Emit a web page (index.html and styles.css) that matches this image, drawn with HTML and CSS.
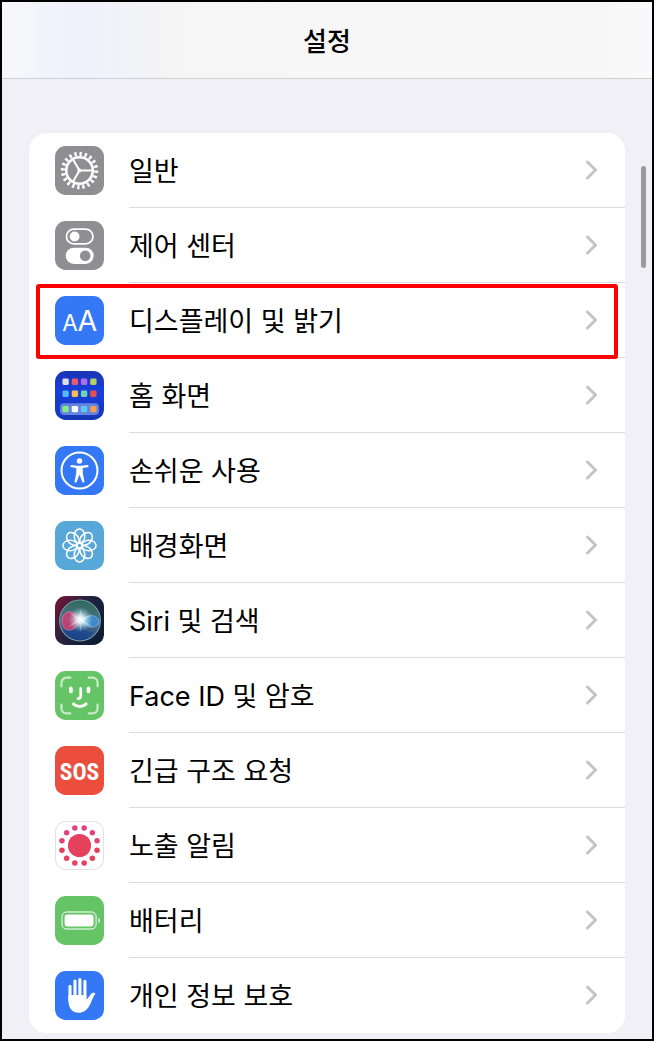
FILE: index.html
```
<!DOCTYPE html>
<html lang="ko">
<head>
    <meta charset="UTF-8">
    <meta name="viewport" content="width=device-width, initial-scale=1.0">
    <title>설정</title>
    <link rel="stylesheet" href="styles.css">
</head>
<body>
    <div class="screen">
        <header class="nav-bar">
            <h1 class="title">설정</h1>
        </header>
        <main class="content">
            <nav class="list">
                <a class="row" href="#general">
                    <svg class="icon" viewBox="0 0 48 48">
                        <rect width="48" height="48" rx="10.5" fill="#8e8e93"/>
                        <g fill="none" stroke="#fff">
                            <circle cx="24" cy="24" r="16.3" stroke-width="4" pathLength="40" stroke-dasharray="0.9 1.1"/>
                            <circle cx="24" cy="24" r="13" stroke-width="2.6"/>
                            <path d="M24 24h12.5M24 24l-6.3-10.8M24 24l-6.3 10.8" stroke-width="2"/>
                        </g>
                        <circle cx="24" cy="24" r="2" fill="#fff"/>
                    </svg>
                    <span class="label">일반</span>
                    <svg class="chevron" viewBox="0 0 12 20"><path d="M2 2l8 8-8 8"/></svg>
                </a>
                <a class="row" href="#control-center">
                    <svg class="icon" viewBox="0 0 48 48">
                        <rect width="48" height="48" rx="10.5" fill="#8e8e93"/>
                        <rect x="11.2" y="8" width="26" height="14.4" rx="7.2" fill="none" stroke="#fff" stroke-width="1.7"/>
                        <circle cx="19.2" cy="15.2" r="4.8" fill="#fff"/>
                        <rect x="10.5" y="26.2" width="27.4" height="15.8" rx="7.9" fill="#fff"/>
                        <circle cx="29.6" cy="34.1" r="5.2" fill="#8e8e93"/>
                    </svg>
                    <span class="label">제어 센터</span>
                    <svg class="chevron" viewBox="0 0 12 20"><path d="M2 2l8 8-8 8"/></svg>
                </a>
                <a class="row highlight" href="#display">
                    <svg class="icon" viewBox="0 0 48 48">
                        <rect width="48" height="48" rx="10.5" fill="#3478f6"/>
                        <text class="aa-small" x="7" y="34">A</text>
                        <text class="aa-large" x="22" y="34">A</text>
                    </svg>
                    <span class="label">디스플레이 및 밝기</span>
                    <svg class="chevron" viewBox="0 0 12 20"><path d="M2 2l8 8-8 8"/></svg>
                </a>
                <a class="row" href="#home-screen">
                    <svg class="icon" viewBox="0 0 48 48">
                        <defs>
                            <linearGradient id="home-bg" x1="0" y1="0" x2="0" y2="1">
                                <stop offset="0" stop-color="#1a35b4"/>
                                <stop offset="0.4" stop-color="#173fdc"/>
                                <stop offset="1" stop-color="#1735b8"/>
                            </linearGradient>
                        </defs>
                        <rect width="48" height="48" rx="10.5" fill="url(#home-bg)"/>
                        <rect x="5" y="31.6" width="38" height="11.4" rx="3.5" fill="#6683df"/>
                        <rect x="7.3" y="7.4" width="6.2" height="6.2" rx="1.4" fill="#dcdce4"/>
                        <rect x="16.4" y="7.4" width="6.2" height="6.2" rx="1.4" fill="#ee5a68"/>
                        <rect x="25.4" y="7.4" width="6.2" height="6.2" rx="1.4" fill="#b06cf4"/>
                        <rect x="34.5" y="7.4" width="6.2" height="6.2" rx="1.4" fill="#b5d260"/>
                        <rect x="7.3" y="19.2" width="6.2" height="6.2" rx="1.4" fill="#58b5f6"/>
                        <rect x="16.4" y="19.2" width="6.2" height="6.2" rx="1.4" fill="#f4bd4c"/>
                        <rect x="25.4" y="19.2" width="6.2" height="6.2" rx="1.4" fill="#70d4b0"/>
                        <rect x="34.5" y="19.2" width="6.2" height="6.2" rx="1.4" fill="#e84e48"/>
                        <rect x="7.3" y="34.2" width="6.2" height="6.2" rx="1.4" fill="#84ec84"/>
                        <rect x="16.4" y="34.2" width="6.2" height="6.2" rx="1.4" fill="#fff"/>
                        <rect x="25.4" y="34.2" width="6.2" height="6.2" rx="1.4" fill="#5cc8f8"/>
                        <rect x="34.5" y="34.2" width="6.2" height="6.2" rx="1.4" fill="#f4a050"/>
                    </svg>
                    <span class="label">홈 화면</span>
                    <svg class="chevron" viewBox="0 0 12 20"><path d="M2 2l8 8-8 8"/></svg>
                </a>
                <a class="row" href="#accessibility">
                    <svg class="icon" viewBox="0 0 48 48">
                        <rect width="48" height="48" rx="10.5" fill="#3478f6"/>
                        <circle cx="24" cy="24" r="17.6" fill="none" stroke="#fff" stroke-width="2"/>
                        <circle cx="24" cy="14.6" r="2.7" fill="#fff"/>
                        <path d="M16.4 18.6L22 19.4h4l5.6-.8c1.6-.1 1.8 1.8.3 2.1L27.2 21.6v4.8l1.6 8.2c.2 1.5-1.5 1.9-2 .6L24 28.2l-2.8 7c-.6 1.3-2.3.8-2-.6l1.6-8.2v-4.8l-4.7-.9c-1.5-.4-1.2-2.2.3-2.100z" fill="#fff"/>
                    </svg>
                    <span class="label">손쉬운 사용</span>
                    <svg class="chevron" viewBox="0 0 12 20"><path d="M2 2l8 8-8 8"/></svg>
                </a>
                <a class="row" href="#wallpaper">
                    <svg class="icon" viewBox="0 0 48 48">
                        <defs>
                            <ellipse id="petal" cx="24" cy="14.8" rx="5.2" ry="7"/>
                        </defs>
                        <rect width="48" height="48" rx="10.5" fill="#57a7d9"/>
                        <g fill="none" stroke="#fff" stroke-width="1.5">
                            <use href="#petal"/>
                            <use href="#petal" transform="rotate(45 24 24)"/>
                            <use href="#petal" transform="rotate(90 24 24)"/>
                            <use href="#petal" transform="rotate(135 24 24)"/>
                            <use href="#petal" transform="rotate(180 24 24)"/>
                            <use href="#petal" transform="rotate(225 24 24)"/>
                            <use href="#petal" transform="rotate(270 24 24)"/>
                            <use href="#petal" transform="rotate(315 24 24)"/>
                            <circle cx="24" cy="24" r="2.6"/>
                        </g>
                    </svg>
                    <span class="label">배경화면</span>
                    <svg class="chevron" viewBox="0 0 12 20"><path d="M2 2l8 8-8 8"/></svg>
                </a>
                <a class="row" href="#siri">
                    <svg class="icon" viewBox="0 0 48 48">
                        <defs>
                            <linearGradient id="siri-bg" x1="0" y1="0.2" x2="1" y2="0.8">
                                <stop offset="0" stop-color="#6c1534"/>
                                <stop offset="0.45" stop-color="#202440"/>
                                <stop offset="1" stop-color="#0c1c34"/>
                            </linearGradient>
                            <linearGradient id="siri-orb" x1="0.6" y1="0" x2="0.4" y2="1">
                                <stop offset="0" stop-color="#2c6a5c"/>
                                <stop offset="0.5" stop-color="#4f7088"/>
                                <stop offset="1" stop-color="#143a80"/>
                            </linearGradient>
                            <radialGradient id="siri-glow">
                                <stop offset="0" stop-color="#fff"/>
                                <stop offset="0.3" stop-color="#e8fcff" stop-opacity="0.85"/>
                                <stop offset="1" stop-color="#8cd8e0" stop-opacity="0"/>
                            </radialGradient>
                        </defs>
                        <rect width="48" height="48" rx="10.5" fill="url(#siri-bg)"/>
                        <circle cx="24.5" cy="24" r="20" fill="url(#siri-orb)" stroke="#79a0a8" stroke-width="1"/>
                        <path d="M10 34c7-1 12-5 15-10 2 8 7 13 13 11-7 10-21 10-28-1z" fill="#1c4690" opacity="0.7"/>
                        <path d="M25 24C21 13 8 12 7 24s13 13 18 0z" fill="#d83c70" stroke="#f090a8" stroke-width="0.7" opacity="0.8"/>
                        <path d="M25 24c6-7 18-6 18 1s-12 8-18-1z" fill="#3c90e0" stroke="#8cc8f0" stroke-width="0.7" opacity="0.8"/>
                        <circle cx="25" cy="23" r="12" fill="url(#siri-glow)"/>
                        <path d="M25 13l1.5 8.5L37 18l-9 6 10 7-12-5-1 9-1.5-9.5L13 30l9-6.5L14 16l9.5 5z" fill="#fff" opacity="0.35"/>
                    </svg>
                    <span class="label"><span class="latin">Siri</span> 및 검색</span>
                    <svg class="chevron" viewBox="0 0 12 20"><path d="M2 2l8 8-8 8"/></svg>
                </a>
                <a class="row" href="#face-id">
                    <svg class="icon" viewBox="0 0 48 48">
                        <rect width="48" height="48" rx="10.5" fill="#65c466"/>
                        <g fill="none" stroke="#fff" stroke-linecap="round">
                            <path d="M6.3 15v-3.5a5 5 0 0 1 5-5H15M33 6.5h3.7a5 5 0 0 1 5 5V15M41.7 33v3.5a5 5 0 0 1-5 5H33M15 41.5h-3.7a5 5 0 0 1-5-5V33" stroke-width="2.2" opacity="0.65"/>
                            <path d="M15.6 17v3M32.8 17v3" stroke-width="3.6"/>
                            <path d="M25.2 17v7.5c0 1.8-.8 2.5-2.7 2.5" stroke-width="2.6"/>
                            <path d="M18 32.2c3.5 3.4 9 3.4 12.5 0" stroke-width="2.8"/>
                        </g>
                    </svg>
                    <span class="label"><span class="latin">Face ID</span> 및 암호</span>
                    <svg class="chevron" viewBox="0 0 12 20"><path d="M2 2l8 8-8 8"/></svg>
                </a>
                <a class="row" href="#sos">
                    <svg class="icon" viewBox="0 0 48 48">
                        <rect width="48" height="48" rx="10.5" fill="#eb4e3d"/>
                        <text class="sos" x="24" y="33">SOS</text>
                    </svg>
                    <span class="label">긴급 구조 요청</span>
                    <svg class="chevron" viewBox="0 0 12 20"><path d="M2 2l8 8-8 8"/></svg>
                </a>
                <a class="row" href="#exposure">
                    <svg class="icon" viewBox="0 0 48 48">
                        <rect x="0.5" y="0.5" width="47" height="47" rx="10" fill="#fff" stroke="#e2e2e4"/>
                        <g fill="#e0447c">
                            <circle cx="28.6" cy="6.8" r="2.7"/>
                            <circle cx="36.6" cy="11.4" r="2.7"/>
                            <circle cx="41.2" cy="19.4" r="2.7"/>
                            <circle cx="19.4" cy="6.8" r="2.7"/>
                            <circle cx="11.4" cy="11.4" r="2.7"/>
                            <circle cx="6.8" cy="19.4" r="2.7"/>
                        </g>
                        <g fill="#e6415c">
                            <circle cx="41.2" cy="28.6" r="2.7"/>
                            <circle cx="36.6" cy="36.6" r="2.7"/>
                            <circle cx="28.6" cy="41.2" r="2.7"/>
                            <circle cx="19.4" cy="41.2" r="2.7"/>
                            <circle cx="11.4" cy="36.6" r="2.7"/>
                            <circle cx="6.8" cy="28.6" r="2.7"/>
                            <circle cx="24" cy="24" r="11.3"/>
                        </g>
                    </svg>
                    <span class="label">노출 알림</span>
                    <svg class="chevron" viewBox="0 0 12 20"><path d="M2 2l8 8-8 8"/></svg>
                </a>
                <a class="row" href="#battery">
                    <svg class="icon" viewBox="0 0 48 48">
                        <rect width="48" height="48" rx="10.5" fill="#65c466"/>
                        <rect x="6.9" y="15.7" width="33.4" height="16.6" rx="4.6" fill="none" stroke="#fff" stroke-width="1.3" opacity="0.7"/>
                        <rect x="9.4" y="18.2" width="28.4" height="11.6" rx="2.4" fill="#fff"/>
                        <path d="M42.3 21.3c2.6 1 2.6 4.4 0 5.4z" fill="#fff" opacity="0.7"/>
                    </svg>
                    <span class="label">배터리</span>
                    <svg class="chevron" viewBox="0 0 12 20"><path d="M2 2l8 8-8 8"/></svg>
                </a>
                <a class="row" href="#privacy">
                    <svg class="icon" viewBox="0 0 48 48">
                        <rect width="48" height="48" rx="10.5" fill="#3478f6"/>
                        <path d="M14.7 15v14M19.6 9.8V26M24.4 8.3V26M29.3 10V26" fill="none" stroke="#fff" stroke-width="3" stroke-linecap="round"/>
                        <path d="M13.2 23.5h17.6v4.5c1.5-1.3 2.7-3.2 4-5 1.3-1.8 3-1.9 4.3-1.2.5.3.3.9-.1 1.4-1.3 1.5-2.1 3.7-3.2 6.3C33.2 36 30 41 23.7 41c-7 0-10.500-4.5-10.500-12z" fill="#fff"/>
                    </svg>
                    <span class="label">개인 정보 보호</span>
                    <svg class="chevron" viewBox="0 0 12 20"><path d="M2 2l8 8-8 8"/></svg>
                </a>
            </nav>
        </main>
        <div class="scroll-thumb"></div>
    </div>
</body>
</html>
```

FILE: styles.css
```
* {
    box-sizing: border-box;
}
body {
    margin: 0;
    font-family: 'Noto Sans CJK KR', sans-serif;
    background: #f1f0f6;
    color: #000;
}
.screen {
    position: relative;
    min-height: 100vh;
    border: 2px solid #000;
}
.nav-bar {
    height: 77px;
    display: flex;
    align-items: center;
    justify-content: center;
    background: linear-gradient(to right, #f8f8fb 0%, #f0f1fb 10%, #f0f1fb 14%, #f5f5f6 26%, #f7f7f7 50%, #f7f7f7 92%, #fafafc 100%);
    border-bottom: 1px solid #cfcfd3;
}
.title {
    margin: 0;
    font-size: 26px;
    line-height: 32px;
    font-weight: 500;
}
.content {
    padding: 54px 27px 6px;
}
.list {
    background: #fff;
    border-radius: 18px;
}
.row {
    position: relative;
    display: flex;
    align-items: center;
    height: 75px;
    padding-left: 26px;
    color: #000;
    text-decoration: none;
}
.icon {
    flex: none;
    width: 49px;
    height: 49px;
    margin-right: 25px;
}
.label {
    flex: 1;
    height: 75px;
    font-size: 27px;
    line-height: 74px;
    border-bottom: 1px solid #dcdcde;
    white-space: nowrap;
}
.latin {
    font-family: Inter, sans-serif;
    line-height: 1;
}
.chevron {
    flex: none;
    width: 40px;
    height: 75px;
    padding: 27px 27px 27px 0;
    border-bottom: 1px solid #dcdcde;
    fill: none;
    stroke: #c4c4c7;
    stroke-width: 3;
    stroke-linecap: round;
    stroke-linejoin: round;
}
.row:last-child .label,
.row:last-child .chevron {
    border-bottom-color: transparent;
}
.highlight::after {
    content: '';
    position: absolute;
    inset: 1px 7px -1px;
    border: 4px solid #f00;
    border-radius: 3px;
    z-index: 1;
}
.aa-small,
.aa-large {
    fill: #fff;
    font-family: Inter, sans-serif;
    font-size: 22px;
}
.aa-large {
    font-size: 28px;
}
.sos {
    fill: #fff;
    font-family: 'Roboto Condensed', Roboto, sans-serif;
    font-size: 23px;
    font-weight: 700;
    text-anchor: middle;
}
.scroll-thumb {
    position: absolute;
    top: 164px;
    right: 6px;
    width: 5px;
    height: 102px;
    border-radius: 3px;
    background: #9b9a9f;
}
```
